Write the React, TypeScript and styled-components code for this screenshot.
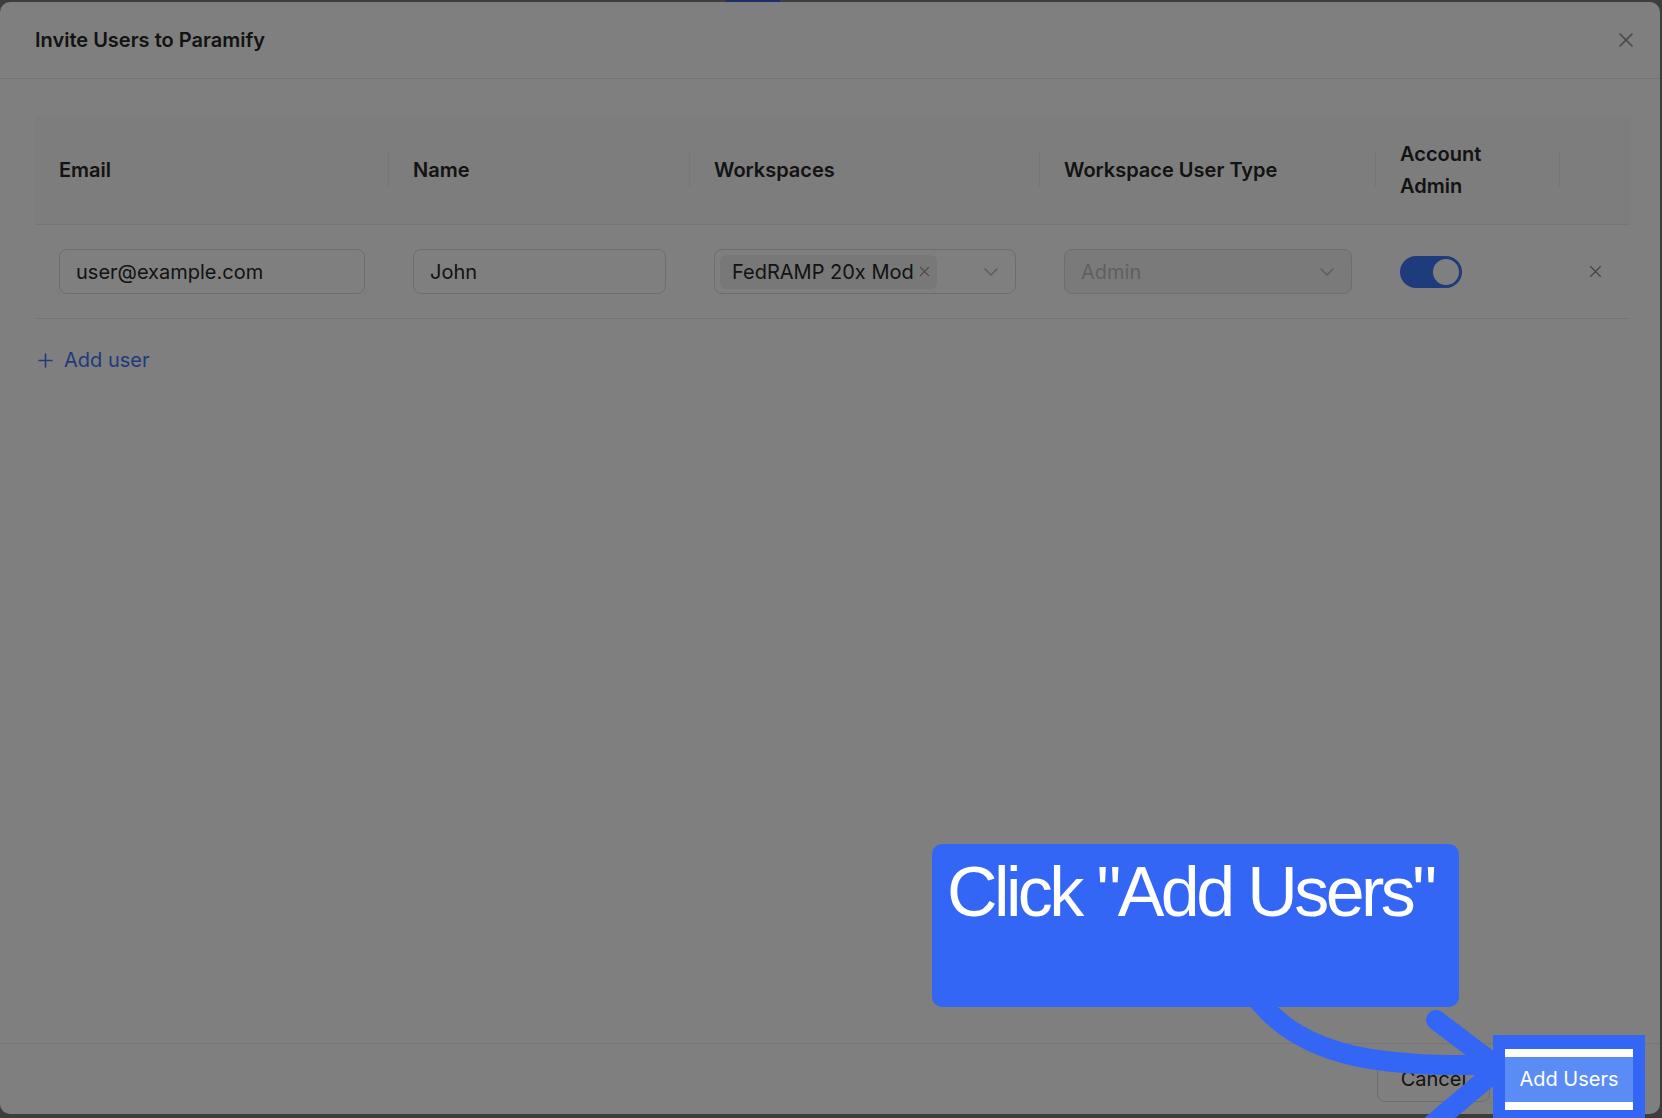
import styled, { createGlobalStyle } from 'styled-components';

type InviteRow = {
  email: string;
  name: string;
  workspaces: string[];
  userType: string;
  accountAdmin: boolean;
};

const rows: InviteRow[] = [
  {
    email: 'user@example.com',
    name: 'John',
    workspaces: ['FedRAMP 20x Mod'],
    userType: 'Admin',
    accountAdmin: true,
  },
];

const columns = [
  { key: 'email', label: 'Email' },
  { key: 'name', label: 'Name' },
  { key: 'workspaces', label: 'Workspaces' },
  { key: 'userType', label: 'Workspace User Type' },
  { key: 'admin', label: 'Account\nAdmin' },
  { key: 'actions', label: '' },
];

const GRID = '354px 301px 350px 336px 184px 1fr';
const PRIMARY = '#3c76f8';

const GlobalStyle = createGlobalStyle`
  html, body {
    margin: 0;
    padding: 0;
  }

  body {
    background: #7a7a7a;
    font-family: Inter, "Noto Sans", "Liberation Sans", sans-serif;
    color: #262626;
    -webkit-font-smoothing: antialiased;
  }

  * {
    box-sizing: border-box;
  }
`;

function CloseIcon({ size = 16 }: { size?: number }) {
  return (
    <svg width={size} height={size} viewBox="0 0 16 16" fill="none">
      <path d="M2 2l12 12M14 2L2 14" stroke="currentColor" strokeWidth="1.6" strokeLinecap="round" />
    </svg>
  );
}

function ChevronIcon() {
  return (
    <svg width="14" height="8" viewBox="0 0 14 8" fill="none">
      <path d="M1 1l6 6 6-6" stroke="currentColor" strokeWidth="1.4" strokeLinecap="round" strokeLinejoin="round" />
    </svg>
  );
}

function PlusIcon() {
  return (
    <svg width="15" height="15" viewBox="0 0 15 15" fill="none">
      <path d="M7.5 1v13M1 7.5h13" stroke="currentColor" strokeWidth="1.6" strokeLinecap="round" />
    </svg>
  );
}

export default function App() {
  return (
    <>
      <GlobalStyle />
      <Screen>
        <TopStrip>
          <TabIndicator />
        </TopStrip>

        <Modal>
          <ModalHeader>
            <Title>Invite Users to Paramify</Title>
            <IconButton aria-label="Close">
              <CloseIcon />
            </IconButton>
          </ModalHeader>

          <ModalBody>
            <HeaderRow>
              {columns.map((c, i) => (
                <HeaderCell key={c.key} $divider={i < columns.length - 1}>
                  {c.label}
                </HeaderCell>
              ))}
            </HeaderRow>

            {rows.map((r, i) => (
              <BodyRow key={i}>
                <Cell>
                  <TextInput readOnly value={r.email} />
                </Cell>
                <Cell>
                  <TextInput readOnly value={r.name} />
                </Cell>
                <Cell>
                  <SelectBox $multi>
                    <TagList>
                      {r.workspaces.map((w) => (
                        <Tag key={w}>
                          {w}
                          <TagClose>
                            <CloseIcon size={11} />
                          </TagClose>
                        </Tag>
                      ))}
                    </TagList>
                    <SelectArrow>
                      <ChevronIcon />
                    </SelectArrow>
                  </SelectBox>
                </Cell>
                <Cell>
                  <SelectBox $disabled>
                    <SelectValue>{r.userType}</SelectValue>
                    <SelectArrow>
                      <ChevronIcon />
                    </SelectArrow>
                  </SelectBox>
                </Cell>
                <Cell>
                  <Switch $checked={r.accountAdmin}>
                    <Knob />
                  </Switch>
                </Cell>
                <Cell $center>
                  <RemoveButton aria-label="Remove">
                    <CloseIcon size={13} />
                  </RemoveButton>
                </Cell>
              </BodyRow>
            ))}

            <AddUserLink>
              <PlusIcon />
              Add user
            </AddUserLink>
          </ModalBody>

          <ModalFooter>
            <Button>Cancel</Button>
            <Button $primary $highlighted>
              Add Users
            </Button>
          </ModalFooter>
        </Modal>

        <Dim />

        <Arrow viewBox="1230 990 290 128" width="290" height="128">
          <path d="M1252 992 C1302 1064 1392 1066 1500 1065" />
          <path d="M1436 1020 L1498 1067" />
          <path d="M1498 1069 L1428 1128" />
        </Arrow>

        <Callout>Click "Add Users"</Callout>
      </Screen>
    </>
  );
}

const Screen = styled.div`
  position: relative;
  width: 1662px;
  height: 1118px;
  overflow: hidden;
  display: flex;
  flex-direction: column;
`;

const TopStrip = styled.div`
  height: 2px;
  flex-shrink: 0;
  display: flex;
  padding-left: 726px;
`;

const TabIndicator = styled.div`
  width: 54px;
  background: #3b5bd0;
`;

const Modal = styled.div`
  width: 1660px;
  height: 1112px;
  flex-shrink: 0;
  background: #fff;
  border-radius: 10px;
  display: flex;
  flex-direction: column;
`;

const ModalHeader = styled.div`
  height: 77px;
  flex-shrink: 0;
  display: flex;
  align-items: center;
  justify-content: space-between;
  padding: 0 26px 0 35px;
  border-bottom: 1px solid #ebebeb;
`;

const Title = styled.h2`
  margin: 0;
  font-size: 20px;
  font-weight: 600;
  color: #262626;
`;

const IconButton = styled.button`
  display: flex;
  padding: 0;
  border: none;
  background: none;
  color: #8c8c8c;
`;

const ModalBody = styled.div`
  flex: 1;
  padding: 37px 30px 0 35px;
`;

const HeaderRow = styled.div`
  display: grid;
  grid-template-columns: ${GRID};
  align-items: center;
  height: 109px;
  background: #fafafa;
  border-bottom: 1px solid #eaeaea;
`;

const HeaderCell = styled.div<{ $divider?: boolean }>`
  position: relative;
  padding: 0 24px;
  font-size: 20px;
  font-weight: 600;
  line-height: 32px;
  color: #262626;
  white-space: pre-line;

  &::after {
    content: '';
    display: ${(p) => (p.$divider ? 'block' : 'none')};
    position: absolute;
    right: 0;
    top: 50%;
    width: 1px;
    height: 35px;
    transform: translateY(-50%);
    background: #ececec;
  }
`;

const BodyRow = styled.div`
  display: grid;
  grid-template-columns: ${GRID};
  align-items: center;
  height: 94px;
  border-bottom: 1px solid #eaeaea;
`;

const Cell = styled.div<{ $center?: boolean }>`
  padding: 0 24px;
  display: flex;
  justify-content: ${(p) => (p.$center ? 'center' : 'flex-start')};
`;

const TextInput = styled.input`
  width: 100%;
  height: 45px;
  padding: 0 16px;
  border: 1px solid #dadada;
  border-radius: 8px;
  font-family: inherit;
  font-size: 20px;
  color: #262626;
  background: #fff;
  outline: none;
`;

const SelectBox = styled.div<{ $multi?: boolean; $disabled?: boolean }>`
  width: 100%;
  height: 45px;
  display: flex;
  align-items: center;
  padding: ${(p) => (p.$multi ? '0 17px 0 5px' : '0 17px 0 16px')};
  border: 1px solid #dadada;
  border-radius: 8px;
  background: ${(p) => (p.$disabled ? '#f4f4f4' : '#fff')};
  color: ${(p) => (p.$disabled ? '#bfbfbf' : '#262626')};
  font-size: 20px;
`;

const TagList = styled.div`
  flex: 1;
  display: flex;
  gap: 4px;
`;

const Tag = styled.span`
  height: 34px;
  display: inline-flex;
  align-items: center;
  gap: 5px;
  padding: 0 7px 0 12px;
  border-radius: 6px;
  background: #f0f0f0;
  color: #262626;
  font-size: 20px;
`;

const TagClose = styled.span`
  display: flex;
  color: #8c8c8c;
`;

const SelectValue = styled.span`
  flex: 1;
`;

const SelectArrow = styled.span`
  display: flex;
  color: #b5b5b5;
`;

const Switch = styled.div<{ $checked?: boolean }>`
  width: 62px;
  height: 32px;
  padding: 3px;
  border-radius: 16px;
  display: flex;
  justify-content: ${(p) => (p.$checked ? 'flex-end' : 'flex-start')};
  background: ${(p) => (p.$checked ? PRIMARY : '#bfbfbf')};
`;

const Knob = styled.span`
  width: 26px;
  height: 26px;
  border-radius: 50%;
  background: #fff;
`;

const RemoveButton = styled.button`
  display: flex;
  padding: 0;
  border: none;
  background: none;
  color: #7a7a7a;
`;

const AddUserLink = styled.div`
  margin: 29px 0 0 3px;
  display: inline-flex;
  align-items: center;
  gap: 11px;
  font-size: 20px;
  line-height: 24px;
  color: ${PRIMARY};
`;

const ModalFooter = styled.div`
  height: 71px;
  flex-shrink: 0;
  display: flex;
  align-items: center;
  justify-content: flex-end;
  gap: 15px;
  padding: 0 27px;
  border-top: 1px solid #ebebeb;
`;

const Button = styled.button<{ $primary?: boolean; $highlighted?: boolean }>`
  position: relative;
  width: ${(p) => (p.$primary ? '128px' : '113px')};
  height: 45px;
  padding: 0;
  border: ${(p) => (p.$primary ? 'none' : '1px solid #dadada')};
  border-radius: ${(p) => (p.$highlighted ? '0' : '8px')};
  background: ${(p) => (p.$primary ? '#5b8cf5' : '#fff')};
  color: ${(p) => (p.$primary ? '#fff' : '#262626')};
  font-family: inherit;
  font-size: 20px;
  white-space: nowrap;
  z-index: ${(p) => (p.$highlighted ? 3 : 'auto')};
  box-shadow: ${(p) => (p.$highlighted ? '0 -8px 0 #fff, 0 8px 0 #fff' : 'none')};

  &::before {
    content: '';
    display: ${(p) => (p.$highlighted ? 'block' : 'none')};
    position: absolute;
    top: -22px;
    bottom: -18px;
    left: -12px;
    right: -12px;
    border: solid #3366f5;
    border-width: 14px 12px 10px;
    pointer-events: none;
  }
`;

const Dim = styled.div`
  position: absolute;
  inset: 0;
  background: rgba(0, 0, 0, 0.5);
  z-index: 1;
  pointer-events: none;
`;

const Arrow = styled.svg`
  position: absolute;
  left: 1230px;
  top: 990px;
  z-index: 2;
  fill: none;
  stroke: #3366f5;
  stroke-width: 20;
  stroke-linecap: round;
  stroke-linejoin: round;
`;

const Callout = styled.div`
  position: absolute;
  left: 932px;
  top: 844px;
  width: 527px;
  height: 163px;
  z-index: 2;
  padding: 8px 15px 0;
  border-radius: 10px;
  background: #3366f5;
  color: #fff;
  font-family: "Liberation Sans", Arial, sans-serif;
  font-size: 70px;
  line-height: 80px;
  letter-spacing: -3.6px;
  white-space: nowrap;
`;
